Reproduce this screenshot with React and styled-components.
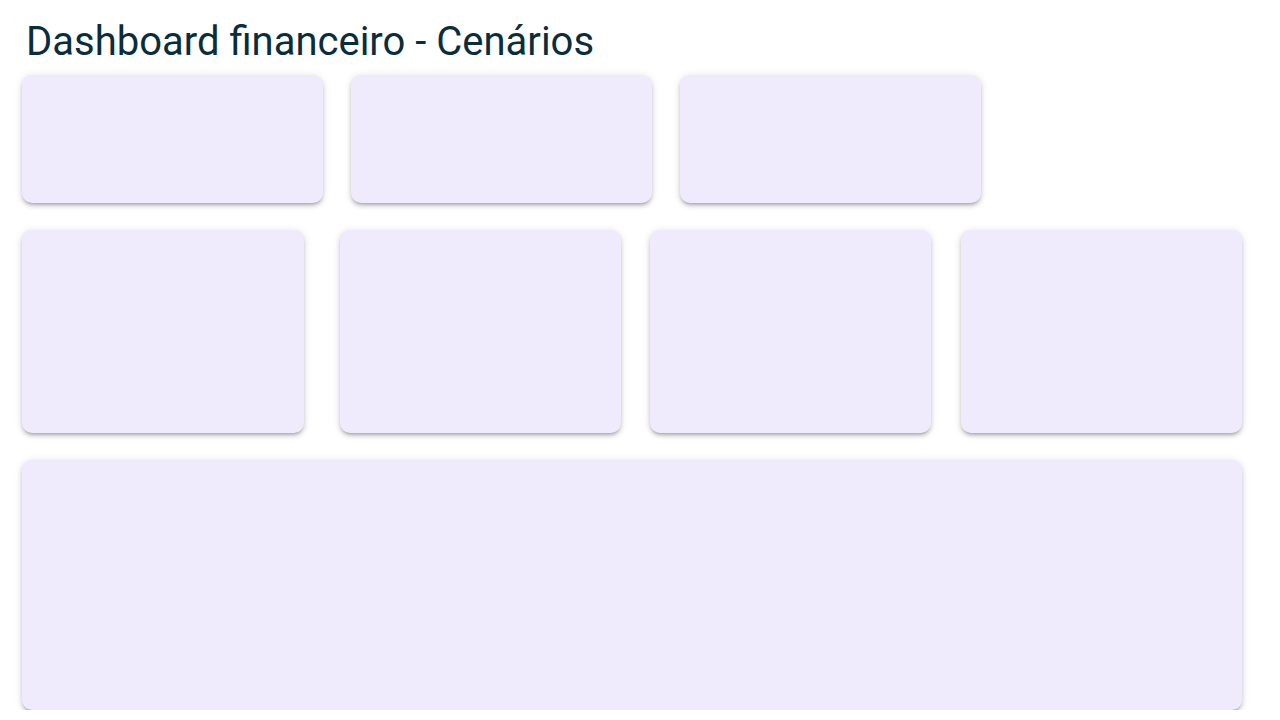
import React from "react";
import styled, { createGlobalStyle } from "styled-components";

const Global = createGlobalStyle`
  html, body { margin: 0; padding: 0; background: #ffffff; }
  body { font-family: Roboto, "Noto Sans", sans-serif; }
`;

const Page = styled.main`
  display: flex;
  flex-direction: column;
  padding: 21px 38px 0 22px;
  width: 1280px;
  box-sizing: border-box;
`;

const Title = styled.h1`
  margin: 0 0 12px 4px;
  font-family: Roboto, "Noto Sans", sans-serif;
  font-weight: 400;
  font-size: 40px;
  line-height: 42px;
  color: #0b2d3b;
  letter-spacing: 0;
`;

const Rows = styled.div`
  display: flex;
  flex-direction: column;
  gap: 27px;
`;

const TopRow = styled.div`
  display: flex;
  gap: 28px;
`;

const MidRow = styled.div`
  display: flex;
`;

const Card = styled.section`
  box-sizing: border-box;
  flex: none;
  width: ${(p) => p.$w || "100%"};
  height: ${(p) => p.$h}px;
  margin-left: ${(p) => p.$ml || 0}px;
  background: #efebfc;
  border-radius: 10px;
  box-shadow: 0 3px 3px -2px rgba(0, 0, 0, 0.2), 0 3px 4px 0 rgba(0, 0, 0, 0.14),
    0 1px 8px 0 rgba(0, 0, 0, 0.12);
`;

export default function App() {
  return (
    <>
      <Global />
      <Page>
        <Title>Dashboard financeiro - Cenários</Title>
        <Rows>
          <TopRow>
            <Card $w="301px" $h={128} />
            <Card $w="301px" $h={128} />
            <Card $w="301px" $h={128} />
          </TopRow>
          <MidRow>
            <Card $w="282px" $h={203} />
            <Card $w="281px" $h={203} $ml={36} />
            <Card $w="281px" $h={203} $ml={29} />
            <Card $w="281px" $h={203} $ml={30} />
          </MidRow>
          <Card $h={250} />
        </Rows>
      </Page>
    </>
  );
}
